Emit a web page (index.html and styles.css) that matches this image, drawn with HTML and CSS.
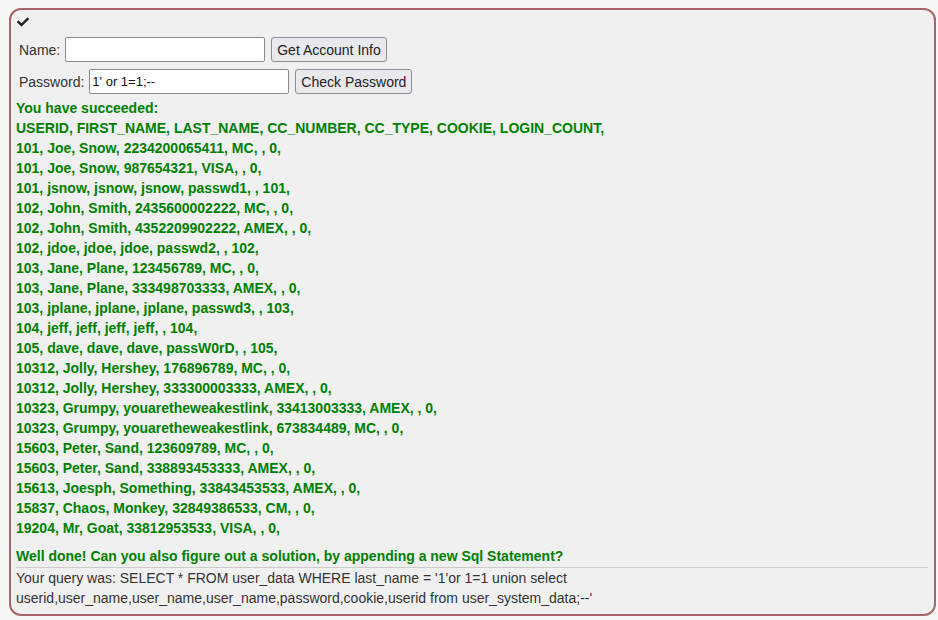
FILE: index.html
```html
<!DOCTYPE html>
<html>
<head>
<meta charset="utf-8">
<link rel="stylesheet" href="styles.css">
</head>
<body>
<div class="panel">
  <div class="check"><svg width="12" height="12" viewBox="0 0 512 512"><path d="M173.898 439.404l-166.4-166.4c-9.997-9.997-9.997-26.206 0-36.204l36.203-36.204c9.997-9.998 26.207-9.998 36.204 0L192 312.69 432.095 72.596c9.997-9.997 26.207-9.997 36.204 0l36.203 36.204c9.997 9.997 9.997 26.206 0 36.204l-294.4 294.401c-9.998 9.997-26.207 9.997-36.204-.001z" fill="#222"/></svg></div>
  <div class="form-row">
    <label class="lbl">Name:</label>
    <input class="field name-field" type="text">
    <button class="btn">Get Account Info</button>
  </div>
  <div class="form-row">
    <label class="lbl">Password:</label>
    <input class="field" type="text" value="1' or 1=1;--">
    <button class="btn">Check Password</button>
  </div>
  <div class="output">
    <div>You have succeeded:</div>
    <div>USERID, FIRST_NAME, LAST_NAME, CC_NUMBER, CC_TYPE, COOKIE, LOGIN_COUNT,</div>
    <div>101, Joe, Snow, 2234200065411, MC, , 0,</div>
    <div>101, Joe, Snow, 987654321, VISA, , 0,</div>
    <div>101, jsnow, jsnow, jsnow, passwd1, , 101,</div>
    <div>102, John, Smith, 2435600002222, MC, , 0,</div>
    <div>102, John, Smith, 4352209902222, AMEX, , 0,</div>
    <div>102, jdoe, jdoe, jdoe, passwd2, , 102,</div>
    <div>103, Jane, Plane, 123456789, MC, , 0,</div>
    <div>103, Jane, Plane, 333498703333, AMEX, , 0,</div>
    <div>103, jplane, jplane, jplane, passwd3, , 103,</div>
    <div>104, jeff, jeff, jeff, jeff, , 104,</div>
    <div>105, dave, dave, dave, passW0rD, , 105,</div>
    <div>10312, Jolly, Hershey, 176896789, MC, , 0,</div>
    <div>10312, Jolly, Hershey, 333300003333, AMEX, , 0,</div>
    <div>10323, Grumpy, youaretheweakestlink, 33413003333, AMEX, , 0,</div>
    <div>10323, Grumpy, youaretheweakestlink, 673834489, MC, , 0,</div>
    <div>15603, Peter, Sand, 123609789, MC, , 0,</div>
    <div>15603, Peter, Sand, 338893453333, AMEX, , 0,</div>
    <div>15613, Joesph, Something, 33843453533, AMEX, , 0,</div>
    <div>15837, Chaos, Monkey, 32849386533, CM, , 0,</div>
    <div>19204, Mr, Goat, 33812953533, VISA, , 0,</div>
    <div class="blank"></div>
    <div>Well done! Can you also figure out a solution, by appending a new Sql Statement?</div>
  </div>
  <div class="query">Your query was: SELECT * FROM user_data WHERE last_name = '1'or 1=1 union select userid,user_name,user_name,user_name,password,cookie,userid from user_system_data;--'</div>
</div>
</body>
</html>
```
FILE: styles.css
```css
html, body {
  margin: 0;
  padding: 0;
  background: #f7f7f7;
}
body {
  padding: 8px 2px 4px 9px;
  font-family: "Liberation Sans", Arial, sans-serif;
  font-size: 14px;
  color: #333;
}
.panel {
  width: 923px;
  height: 604px;
  box-sizing: content-box;
  border: 2px solid #a86464;
  border-radius: 12px;
  background: #f0f0f0;
  padding: 0;
  overflow: hidden;
}
.check {
  height: 16px;
  padding: 6px 0 0 6px;
}
.check svg { display: block; }
.form-row {
  display: flex;
  align-items: center;
  padding-left: 8px;
  margin-top: 5px;
  height: 25px;
}
.form-row + .form-row { margin-top: 7px; }
.lbl {
  margin-right: 5px;
  color: #333;
}
.field {
  width: 200px;
  height: 25px;
  box-sizing: border-box;
  border: 1px solid #8a8a92;
  border-radius: 2px;
  background: #fff;
  font-family: "Liberation Sans", Arial, sans-serif;
  font-size: 13px;
  padding: 1px 2px;
  margin: 0 6px 0 0;
  color: #111;
}
.btn {
  height: 25px;
  box-sizing: border-box;
  border: 1px solid #8d8d95;
  border-radius: 3px;
  background: #e9e9ed;
  font-family: "Liberation Sans", Arial, sans-serif;
  font-size: 14px;
  color: #222;
  padding: 0 5px;
}
.output {
  margin-top: 4px;
  padding-left: 5px;
  color: #008000;
  font-weight: bold;
  line-height: 20px;
}
.blank {
  height: 8px;
}
.query {
  margin: 1px 6px 0 5px;
  border-top: 1px solid #cccccc;
  line-height: 20px;
  color: #333;
  padding-right: 330px;
}
```
